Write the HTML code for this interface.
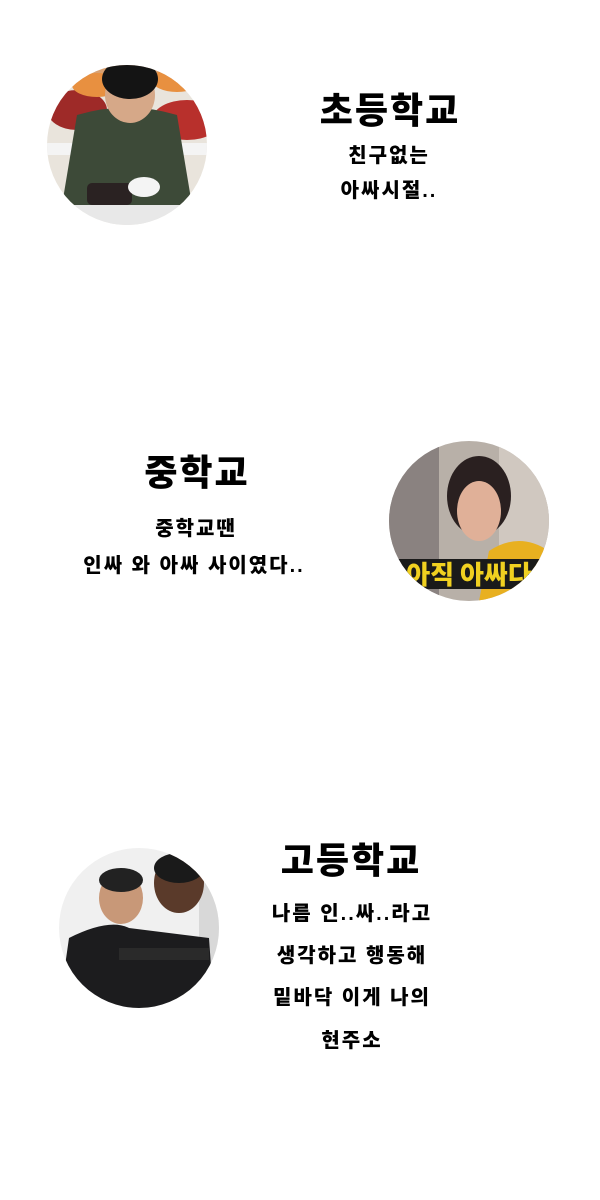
<!DOCTYPE html>
<html><head><meta charset="utf-8"><style>
body{margin:0;width:600px;height:1200px;background:#fff;position:relative;overflow:hidden;font-family:"Liberation Sans","Noto Sans CJK KR",sans-serif;color:#000}
.c{position:absolute;border-radius:50%;overflow:hidden}
.t{position:absolute;text-align:center;font-weight:900;white-space:nowrap;transform:translateX(-50%)}
.h{font-size:36px;line-height:40px;letter-spacing:2px}
.s{font-size:20px;line-height:24px;font-weight:900;letter-spacing:2px}
</style></head><body>
<div class="c" style="left:47px;top:65px;width:160px;height:160px;background:#e9e4dc">
<svg width="160" height="160">
<rect x="0" y="0" width="160" height="20" fill="#d8a070"/>
<ellipse cx="30" cy="45" rx="30" ry="20" fill="#9e2a28"/>
<ellipse cx="140" cy="55" rx="35" ry="20" fill="#b8302c"/>
<ellipse cx="50" cy="20" rx="25" ry="12" fill="#e89040"/>
<ellipse cx="130" cy="15" rx="25" ry="12" fill="#e89040"/>
<rect x="0" y="78" width="160" height="12" fill="#f4f4f4"/>
<path d="M15 140 L30 50 Q80 35 130 50 L145 140 Z" fill="#3d4a38"/>
<ellipse cx="83" cy="30" rx="25" ry="28" fill="#d6a888"/>
<ellipse cx="83" cy="14" rx="28" ry="20" fill="#141414"/>
<rect x="40" y="118" width="45" height="22" rx="5" fill="#2a2222"/>
<ellipse cx="97" cy="122" rx="16" ry="10" fill="#f4f4f4"/>
<rect x="20" y="140" width="130" height="20" fill="#e8e8e8"/>
</svg></div>
<div class="t h" style="left:390px;top:91px">초등학교</div>
<div class="t s" style="left:389px;top:144px">친구없는</div>
<div class="t s" style="left:389px;top:179px">아싸시절..</div>

<div class="t h" style="left:197px;top:453px">중학교</div>
<div class="t s" style="left:196px;top:517px">중학교땐</div>
<div class="t s" style="left:194px;top:554px">인싸 와 아싸 사이였다..</div>
<div class="c" style="left:389px;top:441px;width:160px;height:160px;background:#b8b0a8">
<svg width="160" height="160">
<rect x="0" y="0" width="50" height="160" fill="#8a8280"/>
<rect x="110" y="0" width="50" height="160" fill="#d0c8c0"/>
<path d="M100 110 Q130 90 160 110 L160 160 L90 160 Z" fill="#e8b020"/>
<ellipse cx="90" cy="55" rx="32" ry="40" fill="#2a2020"/>
<ellipse cx="90" cy="70" rx="22" ry="30" fill="#e0b098"/>
<rect x="0" y="118" width="160" height="30" fill="#1a1a1a"/>
<text x="80" y="143" font-size="26" font-weight="900" fill="#f0d020" text-anchor="middle" font-family="Noto Sans CJK KR">아직 아싸다</text>
</svg></div>

<div class="c" style="left:59px;top:848px;width:160px;height:160px;background:#f0f0f0">
<svg width="160" height="160">
<rect x="140" y="0" width="20" height="160" fill="#d8d8d8"/>
<ellipse cx="120" cy="35" rx="25" ry="30" fill="#5a3a2a"/>
<ellipse cx="120" cy="20" rx="25" ry="15" fill="#1a1a1a"/>
<path d="M0 160 L10 90 Q50 70 70 80 L150 90 L155 160 Z" fill="#1c1c1e"/>
<ellipse cx="62" cy="50" rx="22" ry="26" fill="#c89878"/>
<ellipse cx="62" cy="32" rx="22" ry="12" fill="#222"/>
<rect x="60" y="100" width="90" height="12" fill="#2a2a2a"/>
</svg></div>
<div class="t h" style="left:351px;top:841px">고등학교</div>
<div class="t s" style="left:352px;top:902px">나름 인..싸..라고</div>
<div class="t s" style="left:352px;top:944px">생각하고 행동해</div>
<div class="t s" style="left:352px;top:986px">밑바닥 이게 나의</div>
<div class="t s" style="left:352px;top:1029px">현주소</div>
</body></html>
